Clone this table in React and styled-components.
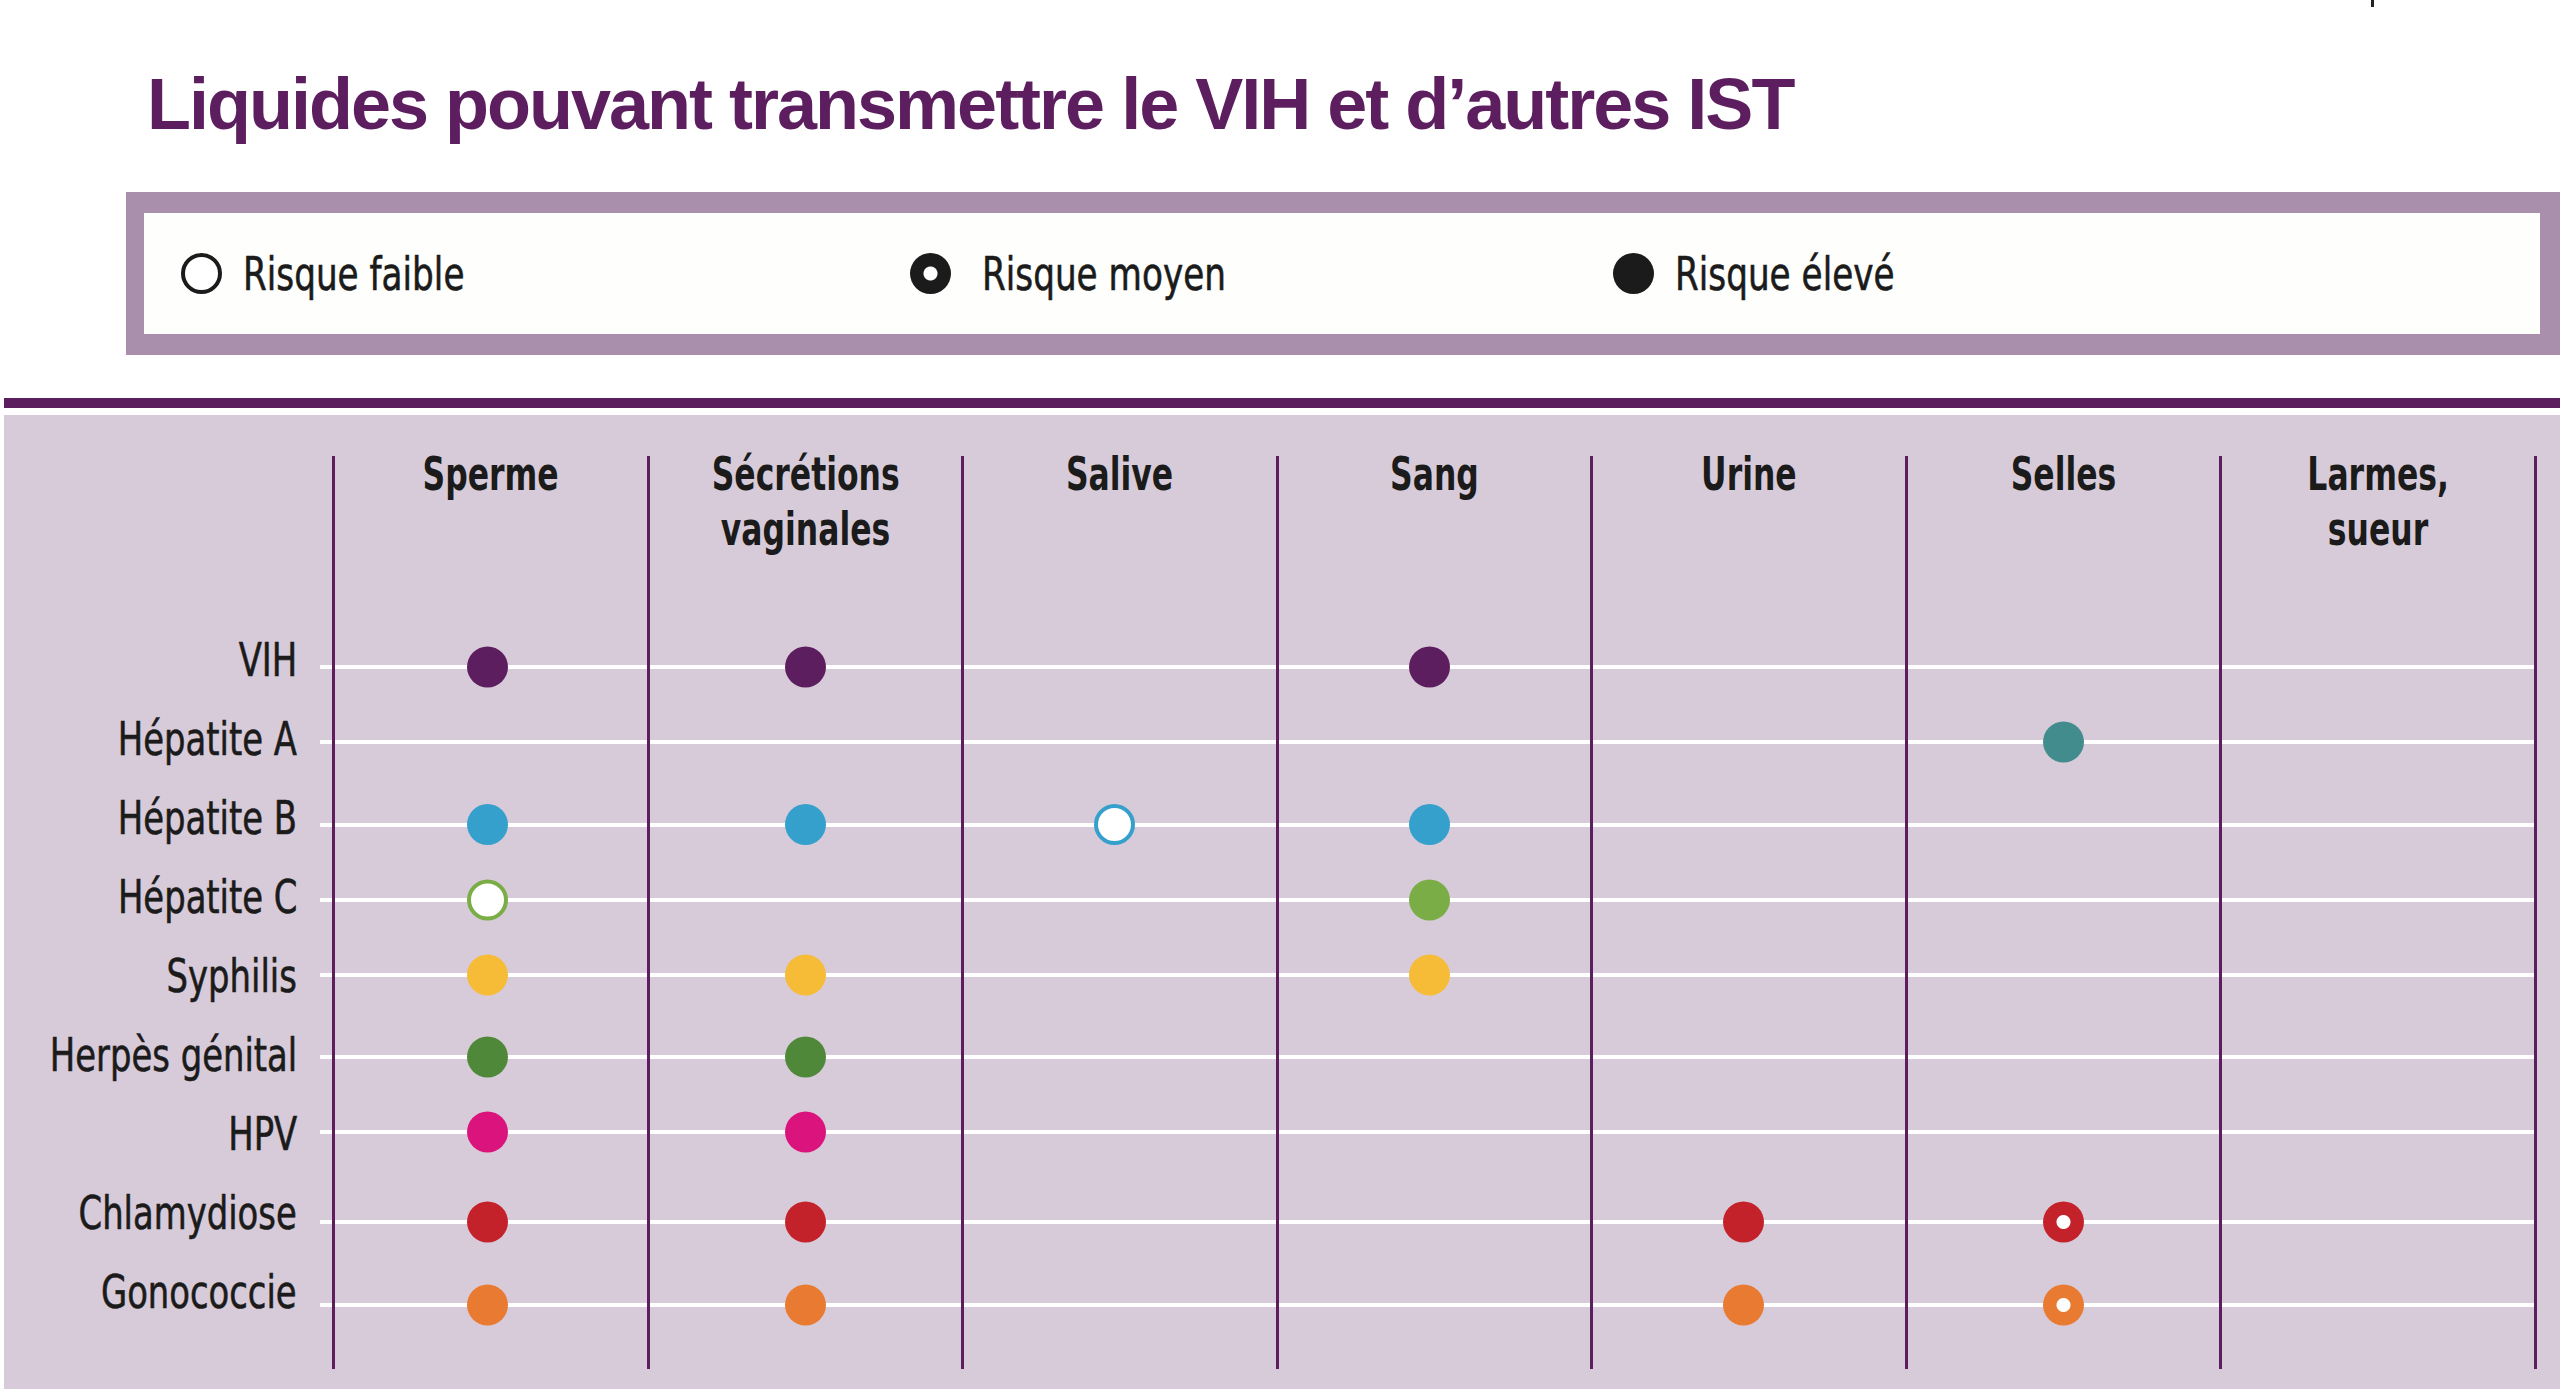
import React from 'react';
import styled, { createGlobalStyle } from 'styled-components';

const PURPLE = '#5d1e5f';
const INK = '#1b1b1b';
const NARROW = `'DejaVu Sans Condensed', 'DejaVu Sans', 'Liberation Sans', sans-serif`;

const COLUMNS = [
	{ lines: ['Sperme'], nudge: -3 },
	{ lines: ['Sécrétions', 'vaginales'], nudge: 0 },
	{ lines: ['Salive'], nudge: -5 },
	{ lines: ['Sang'], nudge: -5 },
	{ lines: ['Urine'], nudge: -5 },
	{ lines: ['Selles'], nudge: 0 },
	{ lines: ['Larmes,', 'sueur'], nudge: 0 },
];

// H = risque élevé, M = risque moyen, L = risque faible
const ROWS = [
	{ label: 'VIH', color: '#5d1e5f', shift: 7.5, cells: ['H', 'H', null, 'H', null, null, null] },
	{ label: 'Hépatite A', color: '#438c8e', shift: 3.5, cells: [null, null, null, null, null, 'H', null] },
	{ label: 'Hépatite B', color: '#35a0cc', shift: 7, cells: ['H', 'H', 'L', 'H', null, null, null] },
	{ label: 'Hépatite C', color: '#7aad46', shift: 3.5, cells: ['L', null, null, 'H', null, null, null] },
	{ label: 'Syphilis', color: '#f6bb37', shift: -0.5, cells: ['H', 'H', null, 'H', null, null, null] },
	{ label: 'Herpès génital', color: '#4e8838', shift: 2.5, cells: ['H', 'H', null, null, null, null, null] },
	{ label: 'HPV', color: '#da147c', shift: -1.5, cells: ['H', 'H', null, null, null, null, null] },
	{ label: 'Chlamydiose', color: '#c4222a', shift: 9.5, cells: ['H', 'H', null, null, 'H', 'M', null] },
	{ label: 'Gonococcie', color: '#e87b31', shift: 13.5, cells: ['H', 'H', null, null, 'H', 'M', null] },
];

const LEGEND = [
	{ level: 'L', text: 'Risque faible', gap: 21 },
	{ level: 'M', text: 'Risque moyen', gap: 31 },
	{ level: 'H', text: 'Risque élevé', gap: 21 },
];

const GlobalStyle = createGlobalStyle`
	body {
		margin: 0;
		background: #ffffff;
	}
`;

const Page = styled.div`
	width: 2560px;
	height: 1392px;
	overflow: hidden;
	background: #ffffff;
	display: flex;
	flex-direction: column;
`;

const CornerStrip = styled.div`
	display: flex;
	justify-content: flex-end;
	padding-right: 186px;
	height: 7px;
`;

const CornerTick = styled.span`
	width: 3px;
	height: 7px;
	background: #222222;
`;

const Title = styled.h1`
	margin: 57px 0 0 147px;
	font-family: 'Liberation Sans', Arial, sans-serif;
	font-weight: 700;
	font-size: 72px;
	line-height: 80px;
	letter-spacing: -2px;
	color: ${PURPLE};
	white-space: nowrap;
`;

const Legend = styled.div`
	box-sizing: border-box;
	margin: 48px 0 0 126px;
	width: 2434px;
	height: 163px;
	border-style: solid;
	border-color: #aa8fac;
	border-width: 21px 20px 21px 18px;
	background: #fefefd;
	display: grid;
	grid-template-columns: 729px 703px 1fr;
	align-items: center;
	padding-left: 37px;
`;

const LegendItem = styled.div`
	display: flex;
	align-items: center;
	gap: ${(p) => p.$gap}px;
`;

const Condensed = styled.span`
	display: inline-block;
	white-space: nowrap;
	transform: scaleX(${(p) => p.$scale || 0.81});
	transform-origin: ${(p) => p.$origin || 'left'} center;
`;

const LegendText = styled(Condensed)`
	font-family: ${NARROW};
	font-size: 47px;
	line-height: 1;
	color: ${INK};
	-webkit-text-stroke: 0.6px ${INK};
`;

const Symbol = styled.span`
	box-sizing: border-box;
	flex: none;
	width: 41px;
	height: 41px;
	border-radius: 50%;
	background: ${(p) =>
		p.$level === 'L'
			? '#ffffff'
			: p.$level === 'M'
			? `radial-gradient(circle, #ffffff 6.5px, ${p.$color} 7.5px)`
			: p.$color};
	border: ${(p) => (p.$level === 'L' ? `4px solid ${p.$color}` : 'none')};
`;

const Rule = styled.div`
	margin: 43px 0 0 4px;
	height: 10px;
	background: ${PURPLE};
`;

const Panel = styled.div`
	margin: 7px 0 0 4px;
	height: 974px;
	box-sizing: border-box;
	padding-top: 41px;
	background: #d8cbd9;
	display: flex;
	flex-direction: column;
`;

const Row = styled.div`
	display: grid;
	grid-template-columns: 328px repeat(6, 314.5px) 317.5px;
	height: ${(p) => p.$height}px;
`;

const Column = styled.div`
	border-left: 3px solid ${PURPLE};
	&:last-child {
		border-right: 3px solid ${PURPLE};
	}
`;

const HeaderCell = styled(Column)`
	display: flex;
	flex-direction: column;
	align-items: center;
	font-family: ${NARROW};
	font-weight: 700;
	font-size: 46px;
	line-height: 55px;
	color: ${INK};
`;

const HeaderLine = styled(Condensed)`
	&:first-child {
		margin-top: -9px;
	}
`;

const LabelCell = styled.div`
	display: flex;
	justify-content: flex-end;
	align-items: center;
	padding-right: 35px;
	font-family: ${NARROW};
	font-size: 47px;
	line-height: 1;
	color: ${INK};
	-webkit-text-stroke: 0.6px ${INK};
	background: linear-gradient(#ffffff, #ffffff) right calc(50% + ${(p) => p.$shift}px) / 12px 4px no-repeat;
`;

const Cell = styled(Column)`
	display: flex;
	justify-content: center;
	align-items: center;
	background: linear-gradient(#ffffff, #ffffff) 0 calc(50% + ${(p) => p.$shift}px) / 100% 4px no-repeat;
`;

const Dot = styled(Symbol)`
	transform: translate(${(p) => p.$nudge}px, ${(p) => p.$shift}px);
`;

const App = () => {
	return (
		<Page>
			<GlobalStyle />
			<CornerStrip>
				<CornerTick />
			</CornerStrip>
			<Title>Liquides pouvant transmettre le VIH et d’autres IST</Title>
			<Legend>
				{LEGEND.map((item) => (
					<LegendItem key={item.level} $gap={item.gap}>
						<Symbol $level={item.level} $color={INK} />
						<LegendText>{item.text}</LegendText>
					</LegendItem>
				))}
			</Legend>
			<Rule />
			<Panel>
				<Row $height={164}>
					<div />
					{COLUMNS.map((col) => (
						<HeaderCell key={col.lines[0]}>
							{col.lines.map((l) => (
								<HeaderLine key={l} $scale={0.76} $origin='center'>
									{l}
								</HeaderLine>
							))}
						</HeaderCell>
					))}
				</Row>
				{ROWS.map((row) => (
					<Row key={row.label} $height={79}>
						<LabelCell $shift={row.shift}>
							<Condensed $scale={0.8} $origin='right'>
								{row.label}
							</Condensed>
						</LabelCell>
						{row.cells.map((level, i) => (
							<Cell key={i} $shift={row.shift}>
								{level && (
									<Dot
										$level={level}
										$color={row.color}
										$shift={row.shift}
										$nudge={COLUMNS[i].nudge}
									/>
								)}
							</Cell>
						))}
					</Row>
				))}
				<Row $height={38}>
					<div />
					{COLUMNS.map((col) => (
						<Column key={col.lines[0]} />
					))}
				</Row>
			</Panel>
		</Page>
	);
};

export default App;
